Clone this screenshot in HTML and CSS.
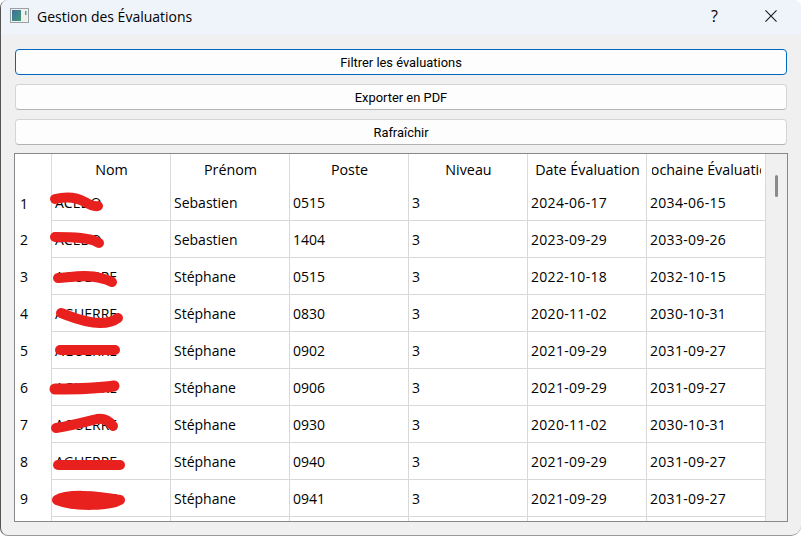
FILE: index.html
```html
<!DOCTYPE html>
<html lang="fr">
<head>
<meta charset="utf-8">
<title>Gestion des Évaluations</title>
<link rel="stylesheet" href="styles.css">
</head>
<body>
<div class="window">
  <header class="titlebar">
    <svg class="app-icon" width="20" height="16" viewBox="0 0 20 16">
      <defs><linearGradient id="g" x1="0" y1="0" x2="1" y2="1"><stop offset="0" stop-color="#3f6f9c"/><stop offset="1" stop-color="#3f9a78"/></linearGradient></defs>
      <rect x="0.5" y="0.5" width="18" height="14" fill="#f2f2f2" stroke="#9aa0a4"/>
      <rect x="2" y="2" width="9" height="11" fill="url(#g)"/>
      <rect x="11" y="2" width="6" height="11" fill="#eef0ee"/>
      <rect x="15" y="3" width="1.5" height="4" fill="#5aa585"/>
    </svg>
    <span class="title">Gestion des Évaluations</span>
    <span class="help">?</span>
    <svg class="close" width="12" height="12" viewBox="0 0 13 13"><path d="M0.5 0.5L12.5 12.5M12.5 0.5L0.5 12.5" stroke="#1a1a1a" stroke-width="1.2" fill="none"/></svg>
  </header>
  <main class="content">
    <button class="btn focused">Filtrer les évaluations</button>
    <button class="btn">Exporter en PDF</button>
    <button class="btn">Rafraîchir</button>
    <section class="table">
      <div class="grid">
        <div class="hd"></div><div class="hd"><div class="lbl"><span>Nom</span></div></div><div class="hd"><div class="lbl"><span>Prénom</span></div></div><div class="hd"><div class="lbl"><span>Poste</span></div></div><div class="hd"><div class="lbl"><span>Niveau</span></div></div><div class="hd"><div class="lbl"><span>Date Évaluation</span></div></div><div class="hd"><div class="lbl"><span>Prochaine Évaluation</span></div></div>
        <div class="num">1</div><div class="c">ACEDO</div><div class="c">Sebastien</div><div class="c">0515</div><div class="c">3</div><div class="c date">2024-06-17</div><div class="c date">2034-06-15</div>
        <div class="num">2</div><div class="c">ACEDO</div><div class="c">Sebastien</div><div class="c">1404</div><div class="c">3</div><div class="c date">2023-09-29</div><div class="c date">2033-09-26</div>
        <div class="num">3</div><div class="c">AGUERRE</div><div class="c">Stéphane</div><div class="c">0515</div><div class="c">3</div><div class="c date">2022-10-18</div><div class="c date">2032-10-15</div>
        <div class="num">4</div><div class="c">AGUERRE</div><div class="c">Stéphane</div><div class="c">0830</div><div class="c">3</div><div class="c date">2020-11-02</div><div class="c date">2030-10-31</div>
        <div class="num">5</div><div class="c">AGUERRE</div><div class="c">Stéphane</div><div class="c">0902</div><div class="c">3</div><div class="c date">2021-09-29</div><div class="c date">2031-09-27</div>
        <div class="num">6</div><div class="c">AGUERRE</div><div class="c">Stéphane</div><div class="c">0906</div><div class="c">3</div><div class="c date">2021-09-29</div><div class="c date">2031-09-27</div>
        <div class="num">7</div><div class="c">AGUERRE</div><div class="c">Stéphane</div><div class="c">0930</div><div class="c">3</div><div class="c date">2020-11-02</div><div class="c date">2030-10-31</div>
        <div class="num">8</div><div class="c">AGUERRE</div><div class="c">Stéphane</div><div class="c">0940</div><div class="c">3</div><div class="c date">2021-09-29</div><div class="c date">2031-09-27</div>
        <div class="num">9</div><div class="c">AGUERRE</div><div class="c">Stéphane</div><div class="c">0941</div><div class="c">3</div><div class="c date">2021-09-29</div><div class="c date">2031-09-27</div>
        <div class="num"></div><div class="c"></div><div class="c"></div><div class="c"></div><div class="c"></div><div class="c"></div><div class="c"></div>
      </div>
      <div class="scrollbar"><div class="thumb"></div></div>
      <svg class="scribbles" width="130" height="368" viewBox="15 154 130 368">
        <g fill="none" stroke="#e8201e" stroke-linecap="round" stroke-linejoin="round" stroke-width="10">
          <path d="M55 199 C68 196 78 198 85 202 C90 205 94 207 98 206"/>
          <path d="M55 237 C70 237 88 238 95 241 C97 242 98 243 99 243"/>
          <path d="M58 278 C72 277 88 274 100 278 C106 279 110 281 112 282"/>
          <path d="M61 313 C72 317 85 323 100 323 C108 323 114 321 118 318"/>
          <path d="M60 350 L115 350"/>
          <path d="M55 389 C75 389 100 388 114 386" stroke-width="11"/>
          <path d="M56 428 C70 426 85 422 97 419 C105 418 110 422 113 426" stroke-width="10"/>
          <path d="M58 465 L120 465"/>
          <path d="M57 500 C66 494 95 495 120 500 C110 506 75 507 57 500 Z" fill="#e8201e"/>
        </g>
      </svg>
    </section>
  </main>
</div>
</body>
</html>
```
FILE: styles.css
```css
* { box-sizing: border-box; }
html, body { margin: 0; padding: 0; background: #fff; }
body { width: 801px; height: 537px; overflow: hidden; font-family: "Open Sans", "Noto Sans", sans-serif; color: #000; }
.window { height: 536px; background: #f0f0f0; border-left: 1px solid #555; border-bottom: 1px solid #9a9a9a; border-radius: 8px 8px 10px 8px; overflow: hidden; display: flex; flex-direction: column; }
.titlebar { height: 35px; flex: none; background: #eff3fa; display: flex; align-items: center; padding-left: 9px; padding-right: 24px; }
.app-icon { flex: none; margin-right: 7px; margin-top: -3px; }
.title { font-size: 14px; flex: 1; margin-top: -3px; white-space: nowrap; }
.help { font-size: 16px; margin-right: 47px; margin-top: -3px; }
.close { margin-top: -3px; flex: none; }
.content { flex: 1; padding: 14px 13px 0 13px; display: flex; flex-direction: column; align-items: stretch; }
.btn { height: 26px; margin: 0 1px 9px 1px; padding: 1px 0 0; background: #fdfdfd; border: 1px solid #d4d4d4; border-bottom-color: #b4b4b4; border-radius: 4px; font-family: Roboto, "Open Sans", sans-serif; font-size: 12.9px; color: #000; }
.btn.focused { border: 1px solid #0067c0; }
.table { position: relative; margin-top: -1px; height: 369px; width: 774px; background: #f0f0f0; border: 1px solid #85888c; display: flex; overflow: hidden; }
.grid { width: 751px; flex: none; background: #fff; display: grid; grid-template-columns: 37px repeat(6, 119px); grid-template-rows: 31px 36px repeat(9, 37px); font-size: 14px; }
.hd { display: flex; align-items: center; padding: 0 4px 1px 5px; border-right: 1px solid #dcdcdc; font-size: 14.3px; }
.lbl { flex: 1; min-width: 0; display: flex; justify-content: center; overflow: hidden; white-space: nowrap; }
.lbl span { flex: none; }
.num { padding-left: 5px; display: flex; align-items: center; border-right: 1px solid #d8d8d8; }
.c { padding-left: 3px; display: flex; align-items: center; white-space: nowrap; overflow: hidden; border-right: 1px solid #d8d8d8; border-bottom: 1px solid #d8d8d8; }
.date { letter-spacing: 0.3px; }
.scrollbar { flex: 1; padding: 21px 0 0 9px; }
.thumb { width: 3px; height: 22px; background: #8a8a8a; border-radius: 2px; }
.scribbles { position: absolute; left: 0; top: 0; pointer-events: none; }
```
